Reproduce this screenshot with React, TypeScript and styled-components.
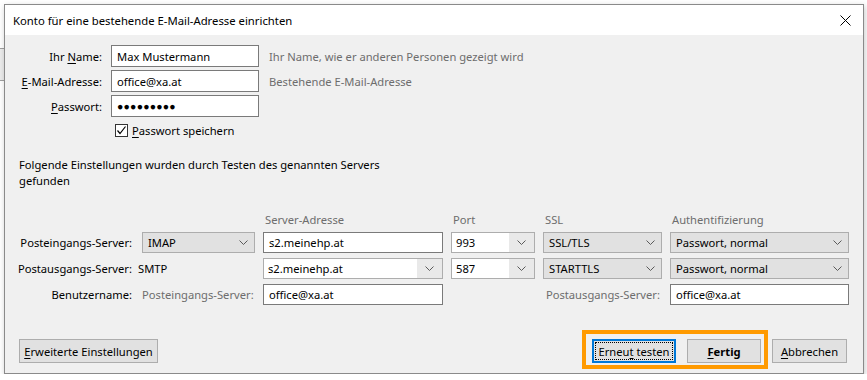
import React from 'react';
import styled, { createGlobalStyle } from 'styled-components';

const GlobalStyle = createGlobalStyle`
  body {
    margin: 0;
    background:
      linear-gradient(#a0a0a0, #a0a0a0) 0 48px / 4px 1px no-repeat,
      linear-gradient(#a0a0a0, #a0a0a0) 0 80px / 4px 1px no-repeat,
      linear-gradient(#ececec, #ececec) 0 49px / 4px 31px no-repeat,
      #ffffff;
    font-family: 'Noto Sans', 'Open Sans', sans-serif;
    font-size: 11.2px;
    color: #000;
  }
`;

const Window = styled.div`
  margin: 4px 0 0 4px;
  width: 860px;
  height: 370px;
  box-sizing: border-box;
  border: 1px solid #8a8a8a;
  background: #f0f0f0;
  box-shadow: 1px 2px 6px rgba(0, 0, 0, 0.22);
  display: flex;
  flex-direction: column;
`;

const TitleBar = styled.div`
  height: 30px;
  background: #fff;
  display: flex;
  align-items: center;
  justify-content: space-between;
  padding: 0 12px 0 8px;
`;

const Title = styled.span`
  font-size: 11.3px;
`;

const CloseButton = styled.div`
  width: 12px;
  height: 12px;
  display: flex;
  align-items: center;
  justify-content: center;
`;

const Body = styled.div`
  flex: 1;
  display: flex;
  flex-direction: column;
`;

const AccountGrid = styled.div`
  display: grid;
  grid-template-columns: 97px 148px 1fr;
  grid-auto-rows: 22px;
  column-gap: 9px;
  row-gap: 3px;
  padding-top: 10px;
  align-items: center;
`;

const Label = styled.span<{ $muted?: boolean; $right?: boolean }>`
  text-align: ${(p) => (p.$right === false ? 'left' : 'right')};
  color: ${(p) => (p.$muted ? '#6d6d6d' : '#000')};
  white-space: nowrap;
`;

const Hint = styled.span`
  color: #6d6d6d;
  padding-left: 1px;
  white-space: nowrap;
`;

const Field = styled.div`
  height: 100%;
  box-sizing: border-box;
  border: 1px solid #7a7a7a;
  background: #fff;
  display: flex;
  align-items: center;
  padding: 0 5px;
  white-space: nowrap;
  overflow: hidden;
`;

const Dots = styled.span`
  font-size: 10.5px;
  letter-spacing: 0.2px;
`;

const CheckRow = styled.div`
  grid-column: 2 / 4;
  display: flex;
  align-items: center;
  gap: 4px;
  margin-left: 4px;
  margin-top: -1px;
`;

const CheckBox = styled.div`
  width: 13px;
  height: 13px;
  box-sizing: border-box;
  border: 1px solid #333;
  background: #fff;
  display: flex;
  align-items: center;
  justify-content: center;
`;

const Info = styled.p`
  margin: 15px 0 0 14px;
  line-height: 16px;
`;

const ServerGrid = styled.div`
  display: grid;
  grid-template-columns: 129px 113px 180px 84px 119px 179px;
  grid-template-rows: 14px repeat(3, 21px);
  column-gap: 8px;
  row-gap: 5px;
  margin-top: 24px;
  align-items: center;
`;

const ColHead = styled.span`
  color: #6d6d6d;
  padding-left: 2px;
  line-height: 14px;
`;

const RowLabel = styled.span<{ $muted?: boolean }>`
  text-align: right;
  white-space: nowrap;
  color: ${(p) => (p.$muted ? '#6d6d6d' : '#000')};
  padding-right: 2px;
`;

const PlainValue = styled.span`
  margin-left: -4px;
`;

const Select = styled.div`
  height: 100%;
  box-sizing: border-box;
  border: 1px solid #adadad;
  background: #e1e1e1;
  display: flex;
  align-items: center;
  justify-content: space-between;
  padding: 0 6px 0 5px;
  white-space: nowrap;
`;

const Combo = styled.div`
  height: 100%;
  box-sizing: border-box;
  border: 1px solid #adadad;
  background: #e9e9e9;
  display: flex;
  align-items: stretch;
`;

const ComboEdit = styled.div`
  flex: 1;
  background: #fff;
  display: flex;
  align-items: center;
  padding-left: 4px;
  white-space: nowrap;
`;

const ComboArrow = styled.div`
  width: 25px;
  display: flex;
  align-items: center;
  justify-content: center;
`;

const ButtonBar = styled.div`
  margin-top: auto;
  display: flex;
  align-items: center;
  padding: 0 16px 10px 14px;
`;

const Button = styled.div<{ $w: number; $bold?: boolean; $focused?: boolean }>`
  position: relative;
  width: ${(p) => p.$w}px;
  height: 24px;
  box-sizing: border-box;
  border: 1px solid ${(p) => (p.$focused ? '#0078d7' : '#adadad')};
  box-shadow: ${(p) => (p.$focused ? 'inset 0 0 0 1px #0078d7' : 'none')};
  background: #e1e1e1;
  display: flex;
  align-items: center;
  justify-content: center;
  font-weight: ${(p) => (p.$bold ? 700 : 400)};
  white-space: nowrap;

  ${(p) =>
    p.$focused &&
    `&::after {
      content: '';
      position: absolute;
      inset: 2px;
      border: 1px dotted #000;
    }`}
`;

const Spacer = styled.div`
  flex: 1;
`;

const Highlight = styled.div`
  position: relative;
  display: flex;
  gap: 11px;
  margin-right: 11px;

  &::before {
    content: '';
    position: absolute;
    top: -9px;
    bottom: -6px;
    left: -10px;
    right: -7px;
    border: 4px solid #ff9a00;
    pointer-events: none;
  }
`;

const Key = styled.span`
  text-decoration: underline;
  text-underline-offset: 2px;
`;

function Chevron() {
  return (
    <svg width="9" height="5" viewBox="0 0 9 5">
      <polyline points="0.5,0.5 4.5,4.5 8.5,0.5" fill="none" stroke="#5a5a5a" strokeWidth="1" />
    </svg>
  );
}

function App() {
  return (
    <>
      <GlobalStyle />
      <Window>
        <TitleBar>
          <Title>Konto für eine bestehende E-Mail-Adresse einrichten</Title>
          <CloseButton>
            <svg width="11" height="11" viewBox="0 0 11 11">
              <path d="M0.5 0.5 L10.5 10.5 M10.5 0.5 L0.5 10.5" stroke="#000" strokeWidth="1" />
            </svg>
          </CloseButton>
        </TitleBar>
        <Body>
          <AccountGrid>
            <Label>
              Ihr <Key>N</Key>ame:
            </Label>
            <Field>Max Mustermann</Field>
            <Hint>Ihr Name, wie er anderen Personen gezeigt wird</Hint>

            <Label>
              <Key>E</Key>-Mail-Adresse:
            </Label>
            <Field>office@xa.at</Field>
            <Hint>Bestehende E-Mail-Adresse</Hint>

            <Label>
              <Key>P</Key>asswort:
            </Label>
            <Field>
              <Dots>●●●●●●●●●</Dots>
            </Field>
            <span />

            <span />
            <CheckRow>
              <CheckBox>
                <svg width="11" height="11" viewBox="0 0 11 11">
                  <polyline points="1.5,5.5 4,8.5 9.5,1.5" fill="none" stroke="#000" strokeWidth="1.2" />
                </svg>
              </CheckBox>
              <span>
                <Key>P</Key>asswort speichern
              </span>
            </CheckRow>
          </AccountGrid>

          <Info>
            Folgende Einstellungen wurden durch Testen des genannten Servers
            <br />
            gefunden
          </Info>

          <ServerGrid>
            <span />
            <span />
            <ColHead>Server-Adresse</ColHead>
            <ColHead>Port</ColHead>
            <ColHead>SSL</ColHead>
            <ColHead>Authentifizierung</ColHead>

            <RowLabel>Posteingangs-Server:</RowLabel>
            <Select>
              IMAP
              <Chevron />
            </Select>
            <Field>s2.meinehp.at</Field>
            <Combo>
              <ComboEdit>993</ComboEdit>
              <ComboArrow>
                <Chevron />
              </ComboArrow>
            </Combo>
            <Select>
              SSL/TLS
              <Chevron />
            </Select>
            <Select>
              Passwort, normal
              <Chevron />
            </Select>

            <RowLabel>Postausgangs-Server:</RowLabel>
            <PlainValue>SMTP</PlainValue>
            <Combo>
              <ComboEdit>s2.meinehp.at</ComboEdit>
              <ComboArrow>
                <Chevron />
              </ComboArrow>
            </Combo>
            <Combo>
              <ComboEdit>587</ComboEdit>
              <ComboArrow>
                <Chevron />
              </ComboArrow>
            </Combo>
            <Select>
              STARTTLS
              <Chevron />
            </Select>
            <Select>
              Passwort, normal
              <Chevron />
            </Select>

            <RowLabel>Benutzername:</RowLabel>
            <Label $muted $right={false}>
              Posteingangs-Server:
            </Label>
            <Field>office@xa.at</Field>
            <span />
            <RowLabel $muted>Postausgangs-Server:</RowLabel>
            <Field>office@xa.at</Field>
          </ServerGrid>

          <ButtonBar>
            <Button $w={139}>
              <span>
                <Key>E</Key>rweiterte Einstellungen
              </span>
            </Button>
            <Spacer />
            <Highlight>
              <Button $w={84} $focused>
                <span>
                  Erneu<Key>t</Key> testen
                </span>
              </Button>
              <Button $w={74} $bold>
                <span>
                  <Key>F</Key>ertig
                </span>
              </Button>
            </Highlight>
            <Button $w={75}>
              <span>
                <Key>A</Key>bbrechen
              </span>
            </Button>
          </ButtonBar>
        </Body>
      </Window>
    </>
  );
}

export default App;
